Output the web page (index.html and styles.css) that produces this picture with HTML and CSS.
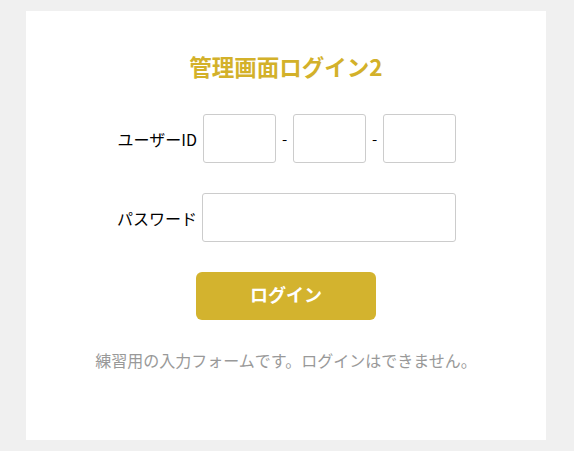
FILE: index.html
```html
<!DOCTYPE html>
<html lang="ja">
<head>
<meta charset="utf-8">
<title>管理画面ログイン2</title>
<link rel="stylesheet" href="styles.css">
</head>
<body>
<main class="card">
  <h1 class="title">管理画面ログイン2</h1>
  <form class="form">
    <div class="row">
      <label class="label">ユーザーID</label>
      <div class="fields">
        <input class="input short" type="text">
        <span class="dash">-</span>
        <input class="input short" type="text">
        <span class="dash">-</span>
        <input class="input short" type="text">
      </div>
    </div>
    <div class="row">
      <label class="label">パスワード</label>
      <div class="fields">
        <input class="input long" type="password">
      </div>
    </div>
    <button class="btn" type="button">ログイン</button>
    <p class="note">練習用の入力フォームです。ログインはできません。</p>
  </form>
</main>
</body>
</html>
```

FILE: styles.css
```css
html, body {
  margin: 0;
  padding: 0;
}
body {
  background: #f0f0f0;
  padding: 11px 28px 11px 26px;
  font-family: "Noto Sans CJK JP", "Noto Sans", sans-serif;
  color: #000;
}
.card {
  background: #fff;
  height: 429px;
  box-sizing: border-box;
  padding-top: 40px;
  display: flex;
  flex-direction: column;
  align-items: center;
}
.title {
  margin: 0;
  font-size: 22.5px;
  line-height: 30px;
  font-weight: 700;
  color: #d3b12a;
}
.form {
  margin-top: 33px;
  display: flex;
  flex-direction: column;
  align-items: center;
  width: 100%;
}
.row {
  display: flex;
  align-items: center;
  width: 350px;
  margin-left: 2px;
  margin-bottom: 30px;
}
.label {
  width: 91px;
  text-align: right;
  font-size: 16px;
  line-height: 20px;
  padding-right: 6px;
  box-sizing: border-box;
  flex: none;
}
.fields {
  display: flex;
  align-items: center;
}
.input {
  box-sizing: border-box;
  height: 49px;
  border: 1px solid #cccccc;
  border-radius: 3px;
  background: #fff;
  margin: 0;
  padding: 0 8px;
  font-size: 15px;
}
.short { width: 73px; }
.long { width: 254px; margin-left: -1px; }
.dash {
  width: 17px;
  text-align: center;
  font-size: 15px;
  line-height: 20px;
}
.btn {
  width: 180px;
  height: 48px;
  border: none;
  border-radius: 6px;
  background: #d3b32e;
  color: #fff;
  font-family: inherit;
  font-size: 18px;
  font-weight: 700;
  padding: 0 0 4px;
  cursor: pointer;
  margin: 0;
}
.note {
  margin: 28px 0 0 0;
  font-size: 16px;
  line-height: 24px;
  color: #999999;
}
```
